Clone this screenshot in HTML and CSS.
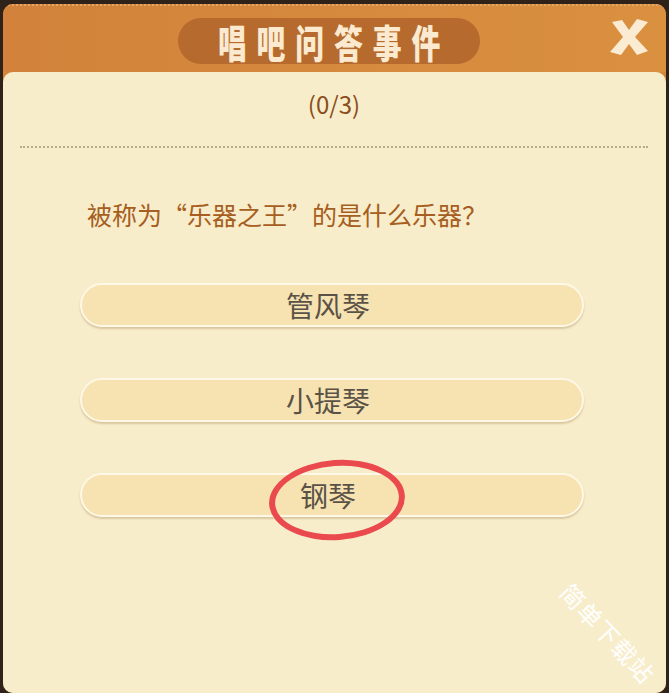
FILE: index.html
```html
<!DOCTYPE html>
<html lang="zh-CN">
<head>
    <meta charset="UTF-8">
    <meta name="viewport" content="width=device-width, initial-scale=1.0">
    <title>唱吧问答事件</title>
    <link rel="stylesheet" href="styles.css">
</head>
<body>
    <div class="dialog">
        <div class="header">
            <div class="title-pill"><span class="title">唱吧问答事件</span></div>
            <button class="close" type="button" aria-label="关闭">
                <svg width="46" height="38" viewBox="0 0 46 38">
                    <path d="M6 4 L16 2 L23 12 L31 1 L42 4 L29 19 L42 33 L31 37 L23 26 L15 37 L4 34 L17 19 Z" fill="#fbebd3"/>
                </svg>
            </button>
        </div>
        <div class="panel">
            <div class="progress">(0/3)</div>
            <div class="divider"></div>
            <p class="question">被称为“乐器之王”的是什么乐器？</p>
            <!-- options -->
            <div class="options">
                <div class="option">管风琴</div>
                <div class="option">小提琴</div>
                <div class="option">钢琴
                    <span class="mark"></span>
                </div>
            </div>
            <div class="watermark">简单下载站</div>
        </div>
    </div>
</body>
</html>
```

FILE: styles.css
```css
body { margin: 0; background-color: #2f2218; font-family: "Noto Sans CJK SC", "Noto Sans", sans-serif; }
.dialog { margin: 4px 3px 0 3px; height: 689px; border-radius: 10px 10px 10px 10px; overflow: hidden; background-color: #d4873a; display: flex; flex-direction: column; }
.header { position: relative; height: 68px; flex-shrink: 0; display: flex; justify-content: center; align-items: center; background: linear-gradient(90deg, #d2823a 0%, #d68b3e 60%, #d9903f 100%); border-top: 2px dotted #e4a566; box-sizing: border-box; }
.title-pill { width: 302px; height: 46px; margin-left: -12px; margin-top: 4px; border-radius: 23px; background-color: #b66a2d; display: flex; justify-content: center; align-items: center; }
.title { display: inline-block; color: #fbead0; font-size: 32px; font-weight: 900; letter-spacing: 11px; margin-right: -11px; transform: scale(0.9, 1.2); }
.close { position: absolute; right: 14px; top: 12px; padding: 0; border: none; background: none; cursor: pointer; line-height: 0; }
.panel { position: relative; flex: 1; background-color: #f8edcb; border-radius: 10px 10px 0 0; padding: 17px 18px 0 17px; }
.progress { text-align: center; font-size: 24px; line-height: 30px; color: #8b4d1c; }
.divider { margin-top: 27px; border-top: 2px dotted #b8aa8c; }
.question { margin: 50px 0 0 67px; font-size: 25px; line-height: 32px; color: #a65e21; }
.options { margin: 53px 0 0 60px; width: 504px; display: flex; flex-direction: column; gap: 51px; }
.option { position: relative; height: 40px; line-height: 40px; text-align: center; font-size: 28px; color: #5a5247; background-color: #f6e3b1; border: 2px solid #fff8e6; border-radius: 22px; box-shadow: 0 2px 2px rgba(160, 130, 80, 0.35); padding-right: 8px; }
.mark { position: absolute; left: 187px; top: -15px; width: 124px; height: 68px; border: 6px solid #ea4a4d; border-radius: 50%; transform: rotate(-4deg); }
.watermark { position: absolute; left: 540px; top: 546px; width: 130px; text-align: center; line-height: 30px; color: #ffffff; font-size: 24px; letter-spacing: 1px; transform: rotate(47deg); }
```
